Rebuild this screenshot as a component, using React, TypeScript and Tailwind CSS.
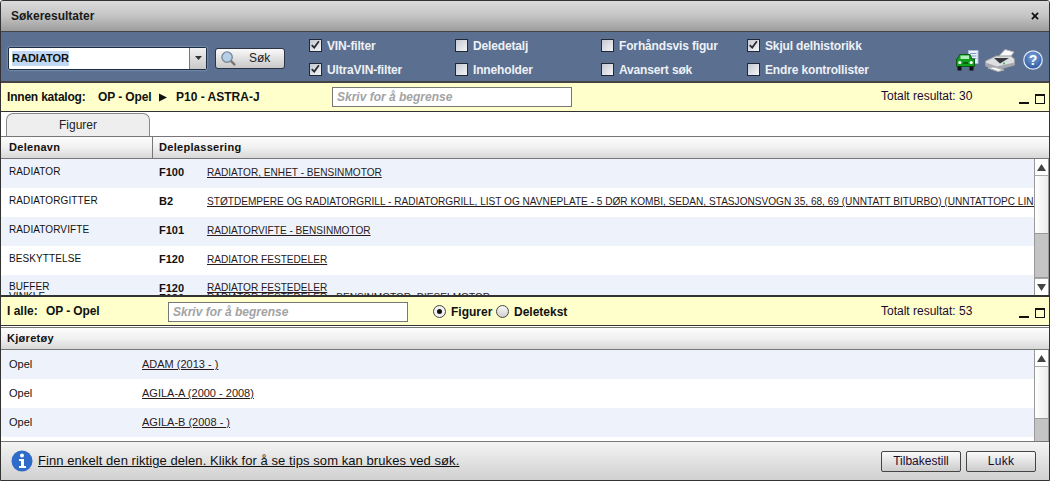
import type { ReactNode } from "react";

const font = "font-['Liberation_Sans',Arial,sans-serif]";

function Check({ label, checked }: { label: string; checked?: boolean }) {
  return (
    <div className="flex items-center gap-[5px] h-[14px]">
      <div className="relative w-[13px] h-[13px] border border-[#20283a] bg-gradient-to-br from-[#c4c8d0] to-[#f4f5f8] shrink-0">
        {checked && (
          <svg viewBox="0 0 13 13" className="absolute inset-0 w-[11px] h-[11px]">
            <path d="M2 6 L5 9 L10.5 1.5" fill="none" stroke="#2a2a2a" strokeWidth="2" />
          </svg>
        )}
      </div>
      <span className="mt-[1px] text-[12px] font-bold text-[#eef1f6] tracking-[-0.15px] whitespace-nowrap">{label}</span>
    </div>
  );
}

function MinMax() {
  return (
    <div className="flex items-end gap-[6px] h-[10px]">
      <div className="w-[10px] h-[2px] bg-[#111]" />
      <div className="w-[10px] h-[10px] border border-[#111] border-t-2" />
    </div>
  );
}

function Header({ children }: { children: ReactNode }) {
  return (
    <div className="flex h-[22px] shrink-0 items-center bg-gradient-to-b from-[#fdfdfd] via-[#f0f0f0] to-[#d8d8d8] border-b border-[#777] text-[11px] font-bold text-[#111] tracking-[0.3px]">
      {children}
    </div>
  );
}

function Scrollbar({ thumbTop, thumbH }: { thumbTop: string; thumbH: string }) {
  return (
    <div className="w-[15px] border-x border-[#999] bg-gradient-to-r from-white to-[#ececec] flex flex-col shrink-0">
      <div className="h-[17px] shrink-0 flex items-center justify-center border-b border-[#aaa] bg-white">
        <svg viewBox="0 0 9 7" className="w-[9px] h-[7px]"><path d="M4.5 0 L9 7 L0 7 Z" fill="#444" /></svg>
      </div>
      <div className={`${thumbTop} shrink-0`} />
      <div className={`${thumbH} shrink-0 bg-[#c4c4c4] border-y border-[#999]`} />
      <div className="h-[17px] shrink-0 flex items-center justify-center border-t border-[#aaa] bg-white">
        <svg viewBox="0 0 9 7" className="w-[9px] h-[7px]"><path d="M4.5 7 L9 0 L0 0 Z" fill="#444" /></svg>
      </div>
    </div>
  );
}

const parts = [
  ["RADIATOR", "F100", "RADIATOR, ENHET - BENSINMOTOR"],
  ["RADIATORGITTER", "B2", "STØTDEMPERE OG RADIATORGRILL - RADIATORGRILL, LIST OG NAVNEPLATE - 5 DØR KOMBI, SEDAN, STASJONSVOGN 35, 68, 69 (UNNTATT BITURBO) (UNNTATTOPC LINE)"],
  ["RADIATORVIFTE", "F101", "RADIATORVIFTE - BENSINMOTOR"],
  ["BESKYTTELSE", "F120", "RADIATOR FESTEDELER"],
];

const vehicles = ["ADAM (2013 - )", "AGILA-A (2000 - 2008)", "AGILA-B (2008 - )"];

export default function App() {
  return (
    <div className={`${font} w-[1050px] h-[481px] overflow-hidden bg-white border border-[#333] rounded-t-[3px] flex flex-col text-[#111]`}>
      {/* title */}
      <div className="h-[31px] shrink-0 flex items-center justify-between pl-[10px] pr-[10px] bg-gradient-to-b from-[#dcdcdc] via-[#c4c4c4] to-[#9c9c9c] border-b border-[#444]">
        <span className="text-[12px] font-bold text-[#1a1a1a]">Søkeresultater</span>
        <svg viewBox="0 0 9 9" className="w-[8px] h-[8px]"><path d="M1 1 L8 8 M8 1 L1 8" stroke="#111" strokeWidth="2" /></svg>
      </div>

      {/* search toolbar */}
      <div className="h-[51px] shrink-0 flex items-center bg-[#5b6f90] border-b-2 border-[#444] pl-[7px]">
        <div className="flex w-[199px] h-[23px] mt-[3px] border border-[#1e2c44] rounded-[2px] bg-white shadow-[0_0_2px_#a8c8ee]">
          <div className="flex-1 flex items-center pl-[3px]">
            <span className="bg-[#c0d8f4] text-[11px] font-bold text-[#111] leading-[15px]">RADIATOR</span>
          </div>
          <div className="w-[17px] border-l border-[#777] bg-gradient-to-b from-[#f2f2f2] to-[#c8c8c8] flex items-center justify-center">
            <svg viewBox="0 0 7 4" className="w-[7px] h-[4px]"><path d="M0 0 H7 L3.5 4 Z" fill="#333" /></svg>
          </div>
        </div>
        <button className="ml-[8px] mt-[3px] w-[70px] h-[21px] flex items-center pl-[4px] border border-[#2c3444] rounded-[3px] bg-gradient-to-b from-[#fafafa] to-[#c8c8c8]">
          <svg viewBox="0 0 18 18" className="w-[17px] h-[17px]">
            <circle cx="7.5" cy="7.5" r="5.5" fill="#b8cfe8" stroke="#7a8a9c" strokeWidth="1.5" />
            <path d="M11.5 11.5 L16 16" stroke="#777" strokeWidth="2.5" />
          </svg>
          <span className="ml-[12px] text-[12px] text-[#222]">Søk</span>
        </button>
        <div className="ml-[24px] mt-[1px] grid grid-cols-[146px_146px_146px_auto] grid-rows-[14px_14px] gap-y-[10px]">
          <Check label="VIN-filter" checked />
          <Check label="Deledetalj" />
          <Check label="Forhåndsvis figur" />
          <Check label="Skjul delhistorikk" checked />
          <Check label="UltraVIN-filter" checked />
          <Check label="Inneholder" />
          <Check label="Avansert søk" />
          <Check label="Endre kontrollister" />
        </div>
        <div className="flex-1" />
        <div className="flex items-center mr-[6px] mt-[7px]">
          <svg viewBox="0 0 23 21" className="w-[23px] h-[21px]">
            <rect x="12.5" y="0.5" width="9.5" height="13" fill="#f2f5fb" stroke="#a8b8dc" />
            <path d="M14 3.5 H20.5 M14 6 H20.5 M14 8.5 H20.5" stroke="#7f97c8" />
            <path d="M3.5 4.5 H14 L16 9 H18.5 V16.5 H0.5 V9 H1.5 Z" fill="#0fa01f" stroke="#0b5c14" />
            <rect x="4.5" y="5.5" width="8.5" height="3.5" fill="#b4ecb8" />
            <circle cx="3.8" cy="12.5" r="1.6" fill="#fff" />
            <circle cx="15.2" cy="12.5" r="1.6" fill="#fff" />
            <rect x="7" y="12" width="5" height="2" fill="#0b5c14" />
            <rect x="1.5" y="16.5" width="4" height="4" fill="#111" />
            <rect x="13.5" y="16.5" width="4" height="4" fill="#111" />
          </svg>
          <svg viewBox="0 0 30 23" className="ml-[6px] w-[30px] h-[23px]">
            <path d="M13 8 L20 0.5 L29 3 L23 11 Z" fill="#fafafa" stroke="#b0b0b0" />
            <path d="M0.5 12 L11 7 H26 L29.5 10 V16 L12 21 L0.5 17 Z" fill="#dcdee2" stroke="#999" />
            <path d="M9 9 L24 9 L15 14.5 Z" fill="#34373c" />
            <path d="M0.5 17 L12 21 L29.5 16 L29.5 13.5 L12 17.5 L0.5 13.5 Z" fill="#a4a8ae" />
            <path d="M3 19 L13 22.5 L19 21 L9 18 Z" fill="#f8f8f8" stroke="#b0b0b0" />
            <circle cx="19" cy="14.5" r="1" fill="#35b04a" />
          </svg>
          <svg viewBox="0 0 20 20" className="ml-[8px] w-[20px] h-[20px]">
            <defs>
              <radialGradient id="helpFill" cx="50%" cy="35%" r="70%">
                <stop offset="0%" stopColor="#7fa6dc" />
                <stop offset="100%" stopColor="#23509c" />
              </radialGradient>
            </defs>
            <circle cx="10" cy="10" r="9.2" fill="url(#helpFill)" stroke="#dbe6f6" strokeWidth="1.3" />
            <text x="10" y="15" textAnchor="middle" fontSize="14" fontWeight="700" fill="#fff" fontFamily="Liberation Sans">?</text>
          </svg>
        </div>
      </div>

      {/* catalog filter */}
      <div className="h-[29px] shrink-0 flex items-center bg-[#ffffcc] border-b border-[#333] pl-[6px] text-[12px]">
        <span className="font-bold tracking-[-0.2px] w-[91px]">Innen katalog:</span>
        <span className="font-bold tracking-[-0.1px] w-[61px]">OP - Opel</span>
        <svg viewBox="0 0 9 9" className="w-[8px] h-[9px] shrink-0"><path d="M0 0 L9 4.5 L0 9 Z" fill="#111" /></svg>
        <span className="font-bold ml-[9px] w-[156px]">P10 - ASTRA-J</span>
        <div className="w-[240px] h-[20px] border border-[#777] bg-white flex items-center pl-[4px] text-[12px] font-bold italic text-[#a3a3a3]">Skriv for å begrense</div>
        <span className="ml-[309px] w-[92px] whitespace-nowrap text-[12px] text-[#1a0a30] -mt-[2px]">Totalt resultat: 30</span>
        <div className="ml-[46px] mt-[3px]"><MinMax /></div>
      </div>

      {/* tab strip */}
      <div className="h-[25px] shrink-0 flex items-end pl-[5px] border-b border-[#777]">
        <div className="w-[144px] h-[23px] border border-b-0 border-[#888] rounded-t-[7px] bg-[#eeeeee] flex items-center justify-center text-[12px] text-[#222]">Figurer</div>
      </div>

      {/* parts table */}
      <Header>
        <div className="w-[152px] h-full flex items-center pl-[8px] border-r border-[#777]">Delenavn</div>
        <div className="pl-[6px]">Deleplassering</div>
      </Header>
      <div className="h-[136px] shrink-0 flex overflow-hidden">
        <div className="flex-1 min-w-0 overflow-hidden leading-[13px]">
          {parts.map((p, i) => (
            <div key={p[0]} className={`h-[29px] flex ${i % 2 === 0 ? "bg-[#eef3fb]" : "bg-white"}`}>
              <div className="w-[150px] pl-[8px] pt-[6px] shrink-0 text-[10px] tracking-[0.1px] text-[#111]">{p[0]}</div>
              <div className="w-[56px] pl-[8px] pt-[7px] shrink-0 text-[11px] font-bold">{p[1]}</div>
              <div className="pt-[7px] text-[10.1px] underline whitespace-nowrap text-[#2a1a1a]">{p[2]}</div>
            </div>
          ))}
          {/* last row wraps and its second line is cut by the panel below */}
          <div className="h-[20px] overflow-hidden flex bg-[#eef3fb] leading-[10px]">
            <div className="w-[150px] pl-[8px] pt-[7px] shrink-0 text-[10px] tracking-[0.1px] text-[#111]">BUFFER<br />VINKLE</div>
            <div className="w-[56px] pl-[8px] pt-[8px] shrink-0 text-[11px] font-bold">F120<br />F120</div>
            <div className="pt-[8px] text-[10.1px] underline whitespace-nowrap text-[#2a1a1a]">RADIATOR FESTEDELER<br />RADIATOR FESTEDELER - BENSINMOTOR, DIESELMOTOR</div>
          </div>
        </div>
        <Scrollbar thumbTop="h-[57px]" thumbH="h-[45px]" />
      </div>

      {/* all catalogs filter */}
      <div className="h-[31px] shrink-0 flex items-center bg-[#ffffcc] border-t-2 border-b border-[#333] pl-[6px] text-[12px] font-bold">
        <span className="w-[39px]">I alle:</span>
        <span className="w-[122px] tracking-[-0.1px]">OP - Opel</span>
        <div className="mt-[1px] w-[240px] h-[20px] border border-[#777] bg-white flex items-center pl-[4px] italic text-[#a3a3a3]">Skriv for å begrense</div>
        <div className="ml-[25px] mt-[1px] w-[13px] h-[13px] rounded-full border border-[#444] bg-[#f2f2f2] flex items-center justify-center">
          <div className="w-[5px] h-[5px] rounded-full bg-[#111]" />
        </div>
        <span className="ml-[5px] mt-[1px] w-[41px]">Figurer</span>
        <div className="ml-[4px] mt-[1px] w-[13px] h-[13px] rounded-full border border-[#444] bg-gradient-to-b from-[#f8f8f8] to-[#d0d0d0]" />
        <span className="ml-[5px] mt-[1px] w-[54px]">Deletekst</span>
        <span className="ml-[313px] w-[92px] whitespace-nowrap font-normal text-[#1a0a30]">Totalt resultat: 53</span>
        <div className="ml-[46px] mt-[3px]"><MinMax /></div>
      </div>

      <div className="h-[1px] shrink-0" />
      <div className="border-t border-[#777] shrink-0">
        <Header>
          <div className="pl-[6px]">Kjøretøy</div>
        </Header>
      </div>

      {/* vehicles */}
      <div className="h-[92px] shrink-0 flex overflow-hidden border-b border-[#777]">
        <div className="flex-1 min-w-0 text-[11px]">
          {vehicles.map((v, i) => (
            <div key={v} className={`h-[29px] flex items-center ${i % 2 === 0 ? "bg-[#eef3fb]" : "bg-white"}`}>
              <div className="w-[141px] pl-[8px] shrink-0 text-[#111]">Opel</div>
              <div className="underline text-[#2a1a1a]">{v}</div>
            </div>
          ))}
        </div>
        <Scrollbar thumbTop="h-[51px]" thumbH="h-[24px]" />
      </div>

      {/* footer */}
      <div className="flex-1 flex items-center bg-gradient-to-b from-[#f4f4f4] to-[#d0d0d0] pl-[10px] pr-[13px]">
        <svg viewBox="0 0 22 22" className="w-[22px] h-[22px]">
          <circle cx="11" cy="11" r="10.5" fill="#2f6bc8" />
          <circle cx="11" cy="5.5" r="2" fill="#fff" />
          <path d="M8 9 H13 V16 H15 V18 H8 V16 H10 V11 H8 Z" fill="#fff" />
        </svg>
        <span className="ml-[5px] text-[13px] tracking-[0.07px] underline text-[#111]">Finn enkelt den riktige delen. Klikk for å se tips som kan brukes ved søk.</span>
        <div className="flex-1" />
        <button className="w-[80px] h-[21px] border border-[#444] rounded-[2px] bg-gradient-to-b from-[#fafafa] to-[#cccccc] text-[12px] text-[#1a0a30]">Tilbakestill</button>
        <button className="ml-[5px] w-[70px] h-[21px] border border-[#444] rounded-[2px] bg-gradient-to-b from-[#fafafa] to-[#cccccc] text-[12px] tracking-[0.3px] text-[#1a0a30]">Lukk</button>
      </div>
    </div>
  );
}
